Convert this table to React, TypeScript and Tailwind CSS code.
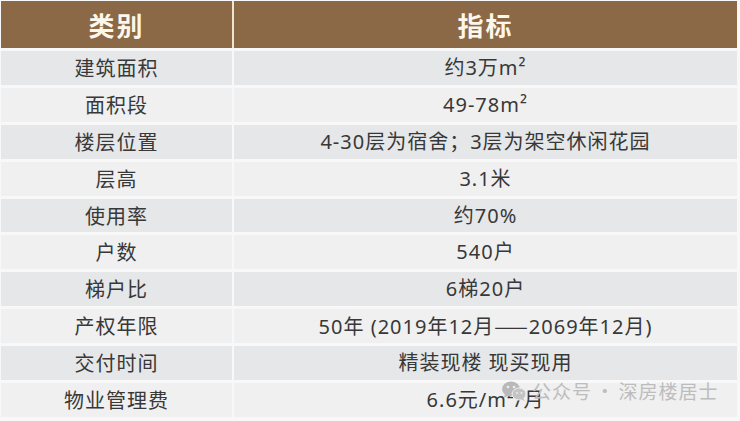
import React from "react";

const rows: [string, React.ReactNode][] = [
  ["建筑面积", "约3万m²"],
  ["面积段", "49-78m²"],
  ["楼层位置", "4-30层为宿舍；3层为架空休闲花园"],
  ["层高", "3.1米"],
  ["使用率", "约70%"],
  ["户数", "540户"],
  ["梯户比", "6梯20户"],
  [
    "产权年限",
    <>
      50年 (2019年12月
      <span className="tracking-[0px] mr-[1px]" style={{ fontFamily: '"Noto Sans CJK SC", sans-serif' }}>
        ——
      </span>
      2069年12月)
    </>,
  ],
  ["交付时间", "精装现楼 现买现用"],
  ["物业管理费", "6.6元/m²/月"],
];

function WeChatIcon() {
  return (
    <svg width="26" height="22" viewBox="0 0 26 22">
      <ellipse cx="10" cy="9" rx="9" ry="7.5" fill="#b9b9b9" />
      <path d="M4 14 L3 18 L8 15 Z" fill="#b9b9b9" />
      <circle cx="7" cy="7" r="1.3" fill="#eeeeee" />
      <circle cx="13" cy="7" r="1.3" fill="#eeeeee" />
      <ellipse cx="18" cy="14" rx="7" ry="6" fill="#c4c4c4" stroke="#eeeeee" strokeWidth="1" />
      <path d="M22 18 L24 21 L19 19 Z" fill="#c4c4c4" />
      <circle cx="16" cy="13" r="1" fill="#eeeeee" />
      <circle cx="20.5" cy="13" r="1" fill="#eeeeee" />
    </svg>
  );
}

export default function App() {
  return (
    <div
      className="relative w-[740px] h-[421px] bg-[#f8f8f8] overflow-hidden"
      style={{ fontFamily: '"Noto Sans CJK SC", "Noto Sans", sans-serif' }}
    >
      <div className="flex flex-col gap-[3px] pt-[1px] pl-[1px] pr-[3px]">
        <div className="grid grid-cols-[231px_1fr] gap-x-[2px] bg-[#efe4cf] h-[47px]">
          <div className="bg-[#8b6846] flex items-center justify-center text-[26px] font-bold text-[#fdf6ea] tracking-[2px]">
            类别
          </div>
          <div className="bg-[#8b6846] flex items-center justify-center text-[26px] font-bold text-[#fdf6ea] tracking-[2px]">
            指标
          </div>
        </div>
        {rows.map(([a, b], i) => {
          const bg = i % 2 === 0 ? "bg-[#e5e7e9]" : "bg-[#f0f0f0]";
          return (
            <div key={a} className="grid grid-cols-[231px_1fr] gap-x-[2px] h-[33.9px]">
              <div className={`${bg} flex items-center justify-center text-[20px] text-[#383838] tracking-[1px]`}>
                {a}
              </div>
              <div
                className={`${bg} flex items-center justify-center text-[20px] text-[#383838] tracking-[1px]`}
                style={{ fontFamily: '"Noto Sans", "Noto Sans CJK SC", sans-serif' }}
              >
                <span>{b}</span>
              </div>
            </div>
          );
        })}
      </div>
      <div className="absolute left-[501px] top-[377px] flex items-center gap-[5px] text-[19px] text-[#bdbdbd] tracking-[1px]">
        <WeChatIcon />
        <span>公众号<span className="mx-[-2px]"> · </span>深房楼居士</span>
      </div>
    </div>
  );
}
